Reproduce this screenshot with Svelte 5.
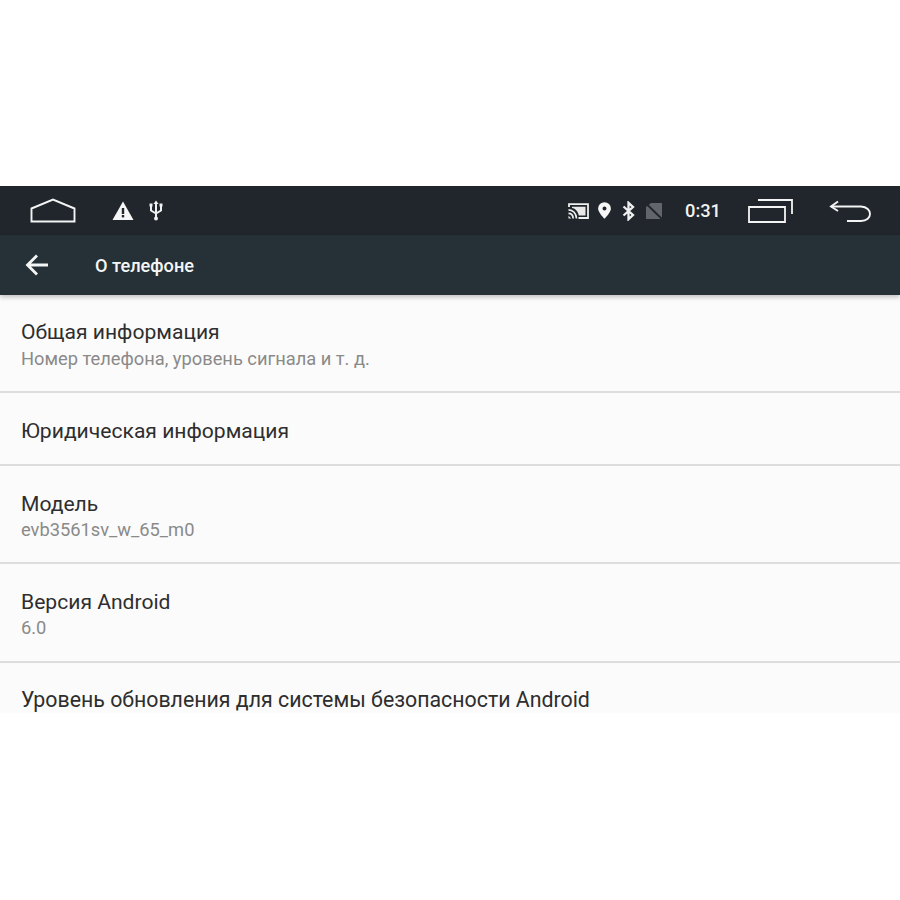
<script>
  const rows = [
    { title: "Общая информация", sub: "Номер телефона, уровень сигнала и т. д." },
    { title: "Юридическая информация" },
    { title: "Модель", sub: "evb3561sv_w_65_m0" },
    { title: "Версия Android", sub: "6.0" },
    { title: "Уровень обновления для системы безопасности Android" }
  ];
</script>

<div class="screen">
  <div class="status">
    <svg class="home" width="46" height="25" viewBox="0 0 46 25">
      <path d="M1.500 23.500V10.500L23 1.500L44.500 10.500V23.500Z" fill="none" stroke="#f4f4f4" stroke-width="1.900" />
    </svg>
    <svg class="warn" width="22" height="20" viewBox="0 0 22 20">
      <path d="M11 0.500L21.500 19H0.500Z" fill="#f6f6f6" />
      <rect x="9.800" y="7" width="2.400" height="6" fill="#20262b" />
      <rect x="9.800" y="14" width="2.400" height="2.400" fill="#20262b" />
    </svg>
    <svg class="usb" width="14" height="21" viewBox="0 0 14 21">
      <path d="M7 3V18M2 6V10.500L7 13.500M12 6V10.500L7 13.500" fill="none" stroke="#f0f0f0" stroke-width="2" />
      <path d="M7 0.500L9.500 4H4.500Z" fill="#f0f0f0" />
      <circle cx="7" cy="18.500" r="2" fill="#f0f0f0" />
      <rect x="0.500" y="3.500" width="3" height="3" fill="#f0f0f0" />
      <rect x="10.500" y="3.500" width="3" height="3" fill="#f0f0f0" />
    </svg>
    <div class="spacer"></div>
    <svg class="cast" width="21" height="16" viewBox="0 0 21 16">
      <path d="M1 4V1.200H20V15H10.500" fill="none" stroke="#f0f0f0" stroke-width="1.800" />
      <path d="M0.500 6.800C5 6.800 8.300 10.500 8.500 15.500M0.500 10.300C3.200 10.300 5 12.500 5.200 15.500" fill="none" stroke="#f0f0f0" stroke-width="1.700" />
      <path d="M0.500 12.700L3.200 15.500H0.500Z" fill="#f0f0f0" />
      <path d="M4 3.800H17.500V12.500H10.800C10 8.500 7.500 5.500 4 5Z" fill="#e8e8e8" />
    </svg>
    <svg class="pin" width="13" height="17" viewBox="0 0 13 17">
      <path fill-rule="evenodd" d="M6.500 0.200A6.400 6.400 0 0 1 12.900 6.600C12.900 10.800 6.500 16.800 6.500 16.800S0.100 10.800 0.100 6.600A6.400 6.400 0 0 1 6.500 0.200ZM6.500 4.600A2 2 0 1 0 6.500 8.600A2 2 0 1 0 6.500 4.600Z" fill="#f6f6f6" />
    </svg>
    <svg class="bt" width="13" height="20" viewBox="0 0 13 20">
      <path d="M1.500 5.500L11 14L6.500 18.200V1.800L11 6L1.500 14.500" fill="none" stroke="#f0f0f0" stroke-width="2.300" />
    </svg>
    <svg class="sim" width="18" height="18" viewBox="0 0 18 18">
      <path d="M6 1H17V17H1V5Z" fill="#62656b" />
      <path d="M1 1.500L17 17" stroke="#20262b" stroke-width="1.800" />
    </svg>
    <span class="clock">0:31</span>
    <svg class="recent" width="45" height="24" viewBox="0 0 45 24">
      <path d="M10 1H44V15M1 8H37V23H1Z" fill="none" stroke="#f4f4f4" stroke-width="1.800" />
    </svg>
    <svg class="back" width="42" height="22" viewBox="0 0 42 22">
      <path d="M9 1.500L2 6.500L9 11" fill="none" stroke="#f4f4f4" stroke-width="1.900" />
      <path d="M2 6.500H32C44 7 44 21 32 21H18" fill="none" stroke="#f4f4f4" stroke-width="1.900" />
    </svg>
  </div>

  <div class="appbar">
    <svg class="arrow" width="24" height="24" viewBox="0 0 24 24">
      <path d="M23 12H3M12 2.500L2.500 12L12 21.500" fill="none" stroke="#f4f6f6" stroke-width="2.800" />
    </svg>
    <span class="title">О телефоне</span>
  </div>

  <div class="list">
    {#each rows as row}
      <div class="row" class:double={row.sub}>
        <div class="name">{row.title}</div>
        {#if row.sub}<div class="sub">{row.sub}</div>{/if}
      </div>
    {/each}
  </div>
</div>

<style>
  :global(body) {
    background: #fff;
  }

  .screen {
    padding-top: 186px;
    height: 714px;
    box-sizing: border-box;
    font-family: Roboto, "Liberation Sans", sans-serif;
  }

  .status {
    height: 49px;
    background: #20262b;
    display: flex;
    align-items: center;
    padding: 0 29px 0 30px;
  }

  .warn {
    margin-left: 36px;
  }

  .usb {
    margin-left: 15px;
  }

  .spacer {
    flex: 1;
  }

  .cast {
    margin-right: 9px;
  }

  .pin {
    margin-right: 10.500px;
  }

  .bt {
    margin-right: 10.500px;
  }

  .clock {
    margin-left: 22px;
    color: #f2f2f2;
    font-size: 18.300px;
    font-weight: 500;
    width: 36px;
  }

  .recent {
    margin-left: 26.500px;
  }

  .back {
    margin-left: 36.500px;
  }

  .appbar {
    height: 60px;
    background: #253136;
    display: flex;
    align-items: center;
    padding-left: 25px;
    position: relative;
    box-shadow: 0 2px 5px rgba(0, 0, 0, 0.25);
  }

  .title {
    margin-left: 46px;
    color: #f4f6f6;
    font-size: 18.200px;
    font-weight: 500;
    padding-top: 1px;
  }

  .list {
    background: #fbfbfb;
    height: 418px;
    overflow: hidden;
  }

  .row {
    height: 72.500px;
    box-sizing: border-box;
    border-bottom: 2px solid #dddddd;
    padding: 24.500px 21px 0;
  }

  .row.double {
    height: 98.500px;
    padding-top: 25px;
  }

  .row:first-child {
    height: 98px;
    padding-top: 24px;
  }

  .row:last-child {
    border-bottom: none;
  }

  .name {
    color: #2e2e2e;
    font-size: 21.100px;
    line-height: 25px;
  }

  .row:last-child .name {
    font-size: 21.340px;
  }

  .sub {
    color: #8a8a8a;
    font-size: 18.300px;
    line-height: 22px;
    margin-top: 3px;
  }

  .row:first-child .sub {
    margin-top: 4px;
  }
</style>
